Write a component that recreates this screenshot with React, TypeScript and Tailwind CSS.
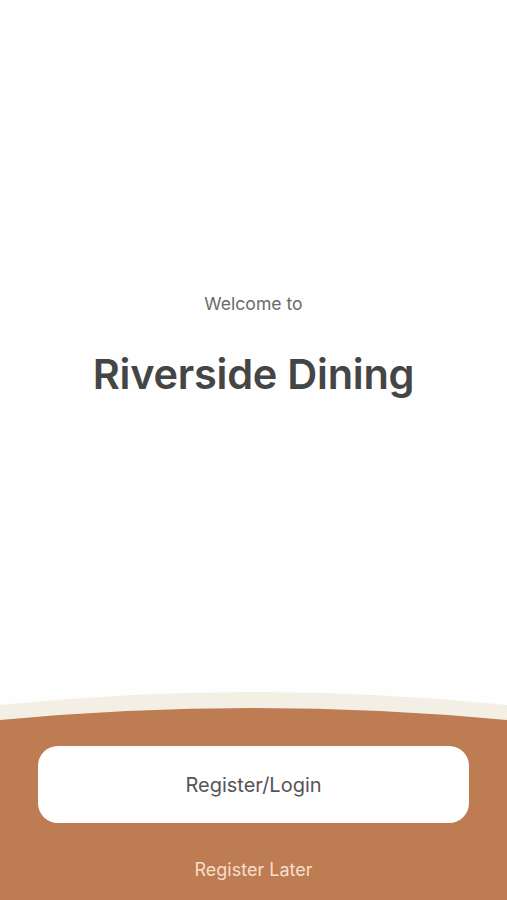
export default function App() {
  return (
    <div className="flex flex-col h-[900px] w-full bg-[#fefefe] font-['Inter','Liberation_Sans',sans-serif]">
      <div className="flex-1 flex flex-col items-center pt-[291px]">
        <div className="text-[17.6px] leading-[26px] text-[#6b6b6b]">Welcome to</div>
        <h1 className="mt-[32px] text-[41.5px] leading-[50px] font-semibold text-[#454545] tracking-[-0.25px]">
          Riverside Dining
        </h1>
      </div>
      <svg className="block w-full h-[30px]" viewBox="0 0 507 30" preserveAspectRatio="none">
        <path d="M0 15 Q253.5 -11 507 15 L507 30 L0 30 Z" fill="#f3efe5" />
        <path d="M0 30 Q253.5 6 507 30 Z" fill="#be7c52" />
      </svg>
      <div className="h-[180px] bg-[#be7c52] flex flex-col items-center px-[38px] pt-[26px]">
        <button className="w-full h-[77px] rounded-[20px] bg-white text-[20px] text-[#555555]">
          Register/Login
        </button>
        <button className="mt-[33px] text-[18px] text-[#f7dfcc]">Register Later</button>
      </div>
    </div>
  );
}
